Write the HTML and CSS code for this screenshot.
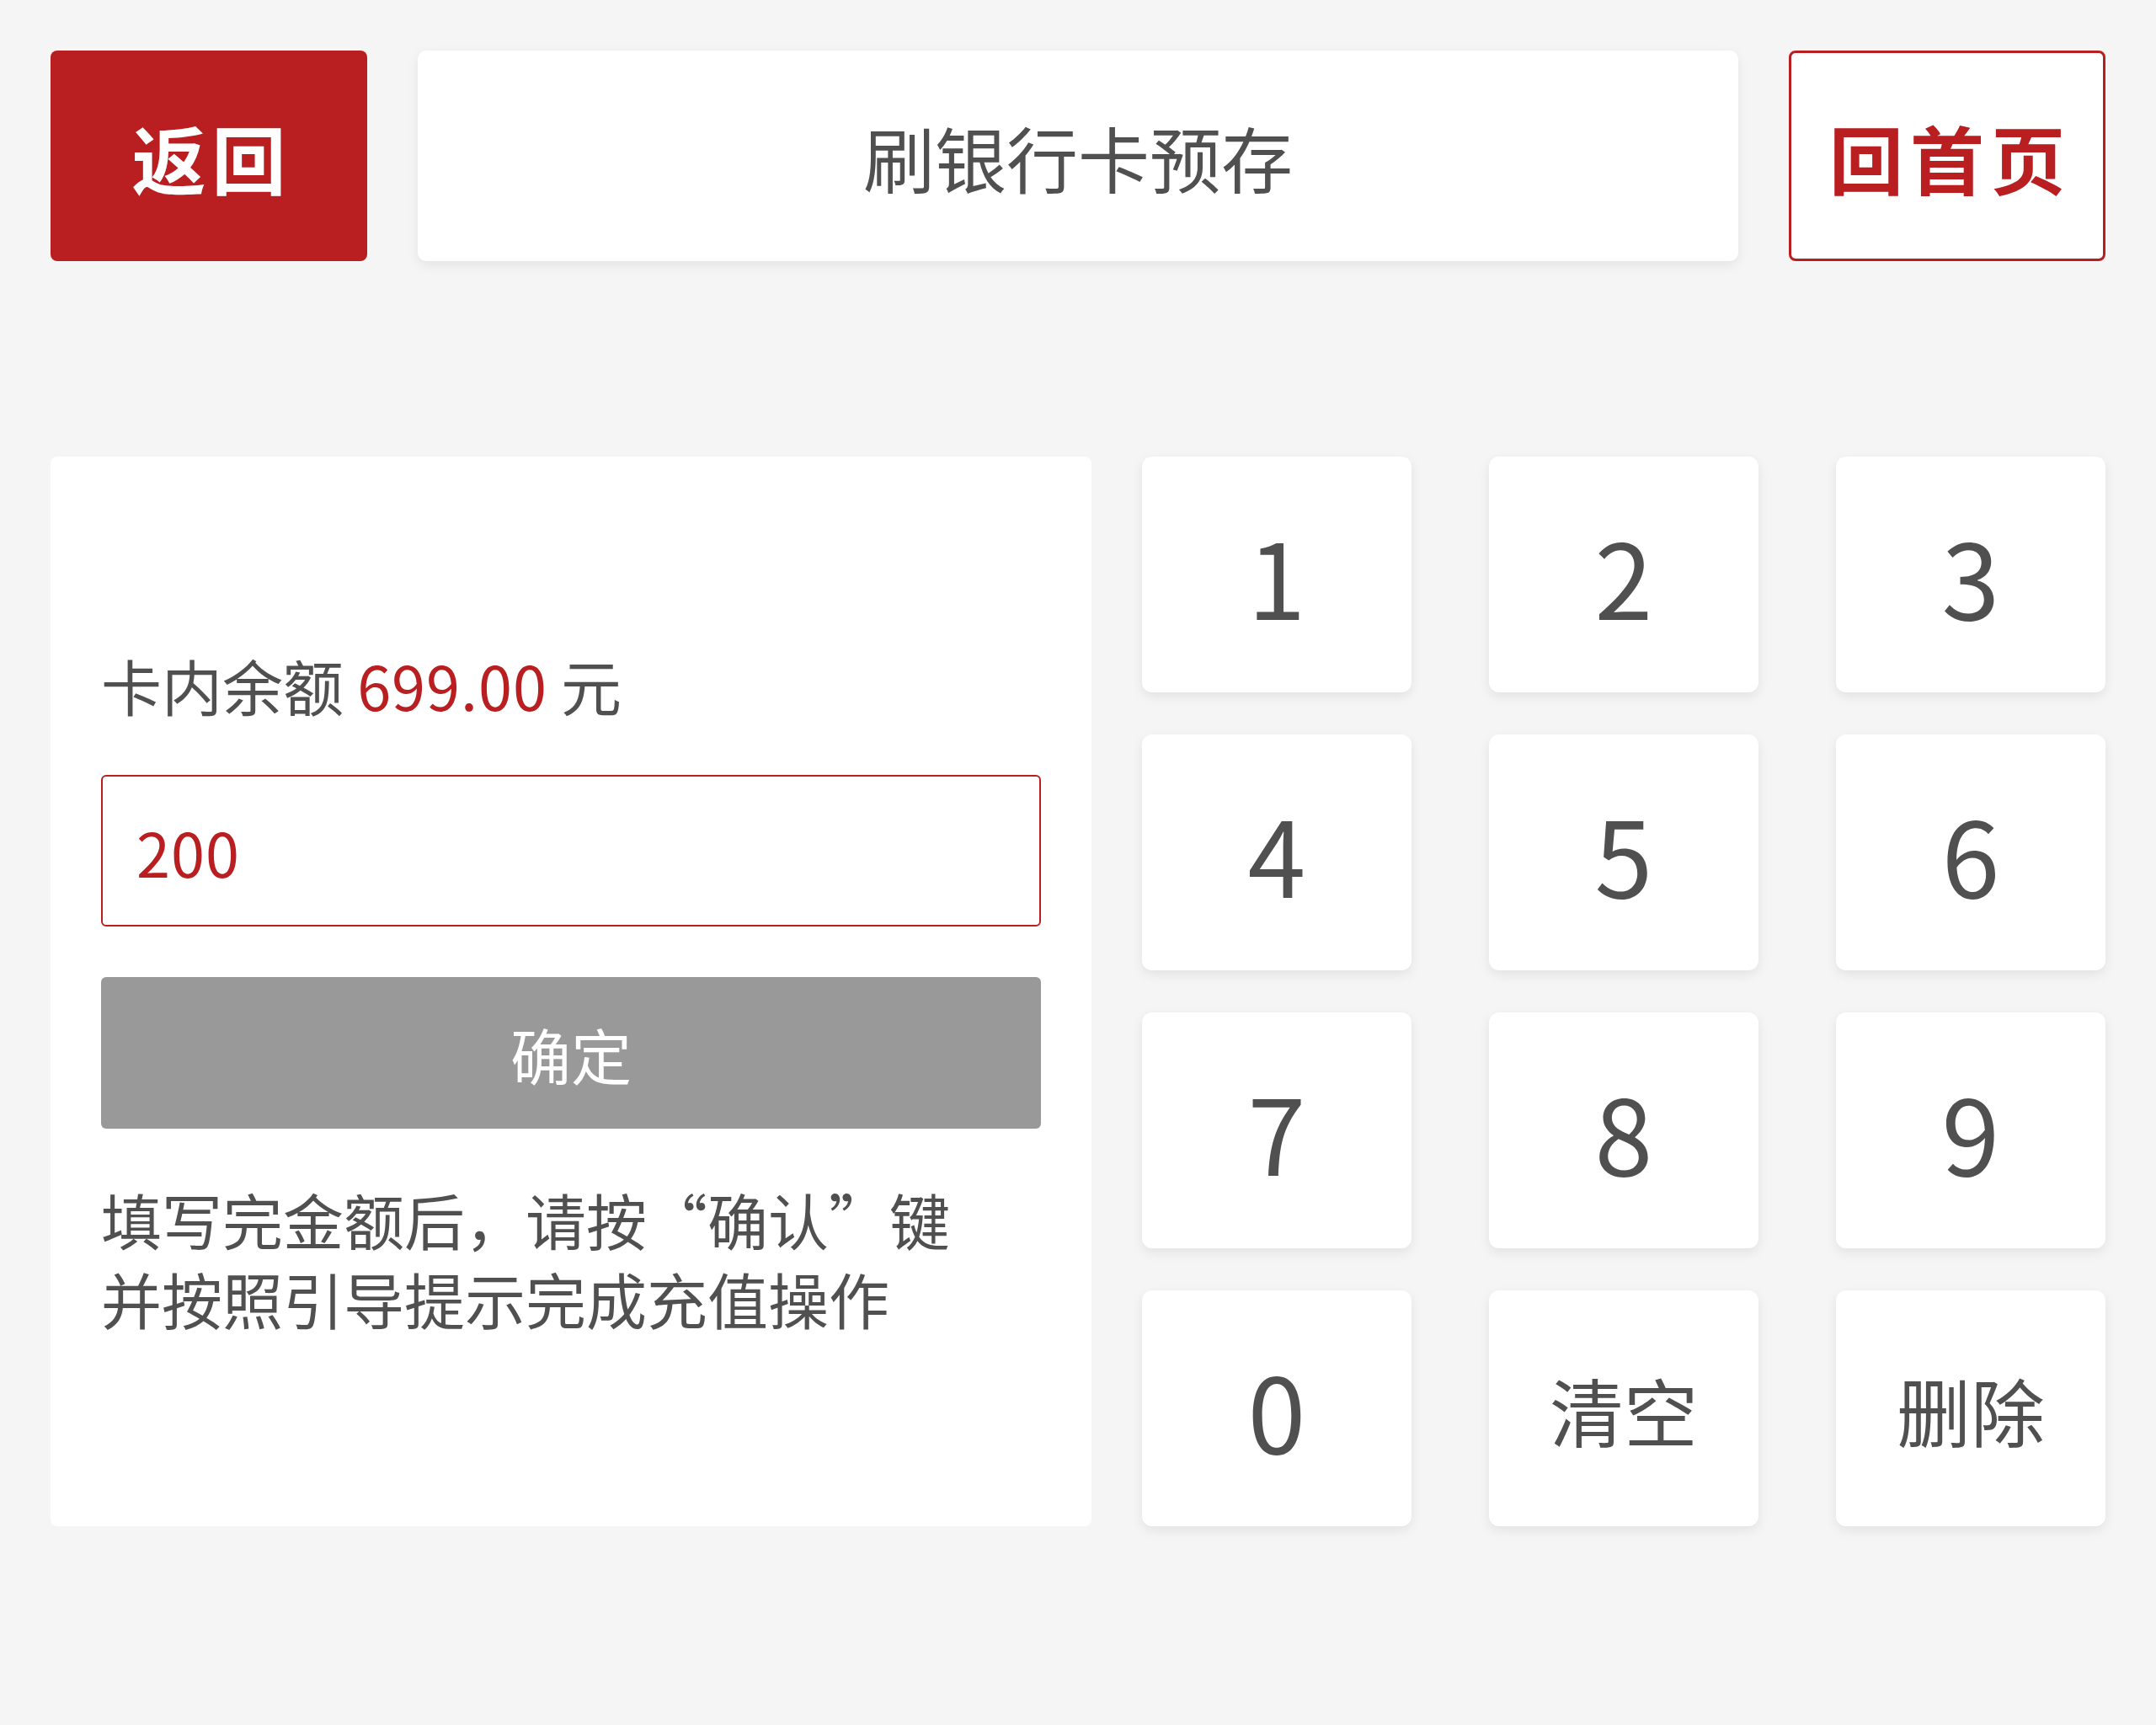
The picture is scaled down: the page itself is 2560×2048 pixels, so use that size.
FILE: index.html
```html
<!DOCTYPE html>
<html lang="zh-CN">
<head>
<meta charset="utf-8">
<title>刷银行卡预存</title>
<link rel="stylesheet" href="styles.css">
</head>
<body>
<div class="page">
  <header class="topbar">
    <button class="btn-back">返回</button>
    <div class="title">刷银行卡预存</div>
    <button class="btn-home">回首页</button>
  </header>
  <main class="main">
    <section class="panel">
      <div class="panel-content">
        <div class="balance">卡内余额 <span class="amount">699.00</span> 元</div>
        <div class="amount-input">200</div>
        <button class="btn-confirm">确定</button>
        <p class="hint">填写完金额后<span class="punct">，</span>请按“确认”键<br>并按照引导提示完成充值操作</p>
      </div>
    </section>
    <section class="keypad">
      <button class="key digit">1</button>
      <button class="key digit">2</button>
      <button class="key digit">3</button>
      <button class="key digit">4</button>
      <button class="key digit">5</button>
      <button class="key digit">6</button>
      <button class="key digit">7</button>
      <button class="key digit">8</button>
      <button class="key digit">9</button>
      <button class="key digit">0</button>
      <button class="key word">清空</button>
      <button class="key word">删除</button>
    </section>
  </main>
</div>
</body>
</html>
```
FILE: styles.css
```css
* {
  box-sizing: border-box;
}
html, body {
  margin: 0;
  padding: 0;
  background: #f5f5f5;
  height: 100%;
}
body {
  font-family: "Noto Sans CJK SC", "Noto Sans", sans-serif;
  color: #505050;
}
button {
  font-family: inherit;
  margin: 0;
}
.page {
  padding: 60px;
}
.topbar {
  display: grid;
  grid-template-columns: 376px 1fr 376px;
  gap: 60px;
  height: 250px;
}
.btn-back {
  background: #b91e21;
  color: #ffffff;
  border: none;
  border-radius: 8px;
  font-size: 88px;
  font-weight: 700;
  letter-spacing: 7px;
  text-indent: 7px;
  padding: 0;
}
.title {
  background: #ffffff;
  border-radius: 10px;
  box-shadow: 0 5px 14px rgba(0, 0, 0, 0.07);
  display: flex;
  align-items: center;
  justify-content: center;
  font-size: 85px;
  color: #505050;
}
.btn-home {
  background: #ffffff;
  color: #b91e21;
  border: 3px solid #b91e21;
  border-radius: 8px;
  font-size: 88px;
  font-weight: 700;
  letter-spacing: 8px;
  text-indent: 8px;
  padding: 0;
}
.main {
  margin-top: 232px;
  display: grid;
  grid-template-columns: 1236fr 1144fr;
  gap: 60px;
}
.panel {
  background: #ffffff;
  border-radius: 8px;
  padding: 0 60px;
  display: flex;
  flex-direction: column;
  justify-content: center;
}
.panel-content {
  display: flex;
  flex-direction: column;
  gap: 60px;
}
.balance {
  font-size: 72px;
  line-height: 94px;
  color: #505050;
}
.amount {
  color: #b91e21;
  letter-spacing: 1px;
}
.amount-input {
  height: 180px;
  border: 2px solid #b91e21;
  border-radius: 6px;
  background: #ffffff;
  padding: 0 40px;
  font-size: 72px;
  color: #b91e21;
  display: flex;
  align-items: center;
  letter-spacing: 1px;
}
.btn-confirm {
  height: 180px;
  border: none;
  border-radius: 6px;
  background: #999999;
  color: #ffffff;
  font-size: 72px;
  padding: 0;
}
.hint {
  margin: 0;
  font-size: 72px;
  line-height: 94px;
  color: #505050;
}
.punct {
  font-family: "Noto Sans CJK TC", "Noto Sans CJK SC", sans-serif;
}
.keypad {
  display: grid;
  grid-template-columns: repeat(3, 1fr);
  grid-template-rows: repeat(4, 280px);
  column-gap: 92px;
  row-gap: 50px;
}
.key {
  background: #ffffff;
  border: none;
  border-radius: 12px;
  box-shadow: 0 5px 14px rgba(0, 0, 0, 0.08);
  color: #505050;
  padding: 0;
  display: flex;
  align-items: center;
  justify-content: center;
}
.digit {
  font-size: 124px;
}
.word {
  font-size: 88px;
}
```
